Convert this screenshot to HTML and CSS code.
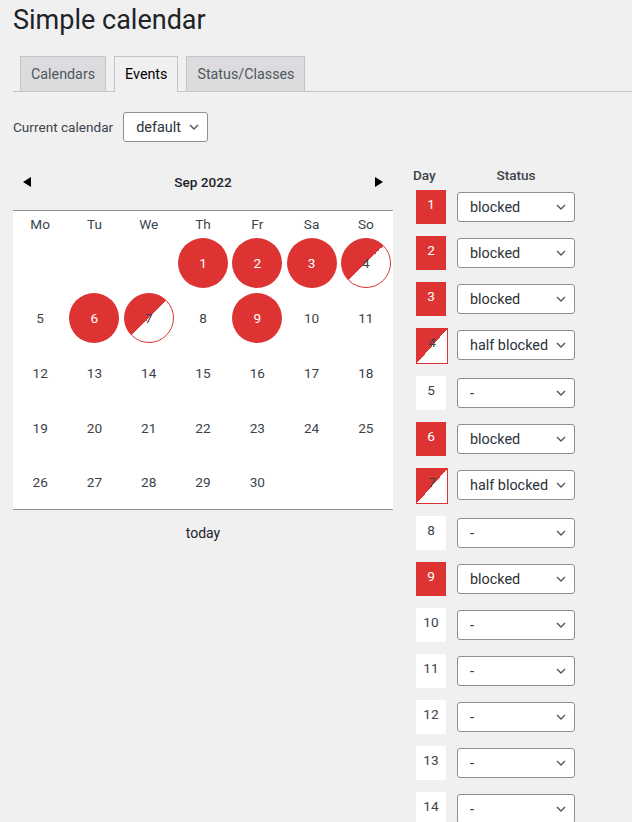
FILE: index.html
```html
<!DOCTYPE html>
<html lang="en">
<head>
<meta charset="utf-8">
<title>Simple calendar</title>
<link rel="stylesheet" href="styles.css">
</head>
<body>
<div class="wrap">
  <h1 class="title">Simple calendar</h1>
  <nav class="tabs">
    <a class="tab">Calendars</a>
    <a class="tab tab-active">Events</a>
    <a class="tab">Status/Classes</a>
  </nav>
  <div class="current">
    <label class="current-label">Current calendar</label>
    <span class="sel sel-cal">
      <select class="sel-input"><option>default</option></select>
      <svg class="chev" width="10" height="6" viewBox="0 0 10 6"><path d="M1 1l4 4 4-4" fill="none" stroke="#50575e" stroke-width="1.4"/></svg>
    </span>
  </div>

  <div class="main">
    <section class="cal">
      <div class="cal-nav">
        <svg class="arrow" width="8" height="10" viewBox="0 0 8 10"><polygon points="8,0 8,10 0,5" fill="#000"/></svg>
        <span class="cal-month">Sep 2022</span>
        <svg class="arrow" width="8" height="10" viewBox="0 0 8 10"><polygon points="0,0 0,10 8,5" fill="#000"/></svg>
      </div>
      <div class="cal-grid">
        <div class="dow">Mo</div><div class="dow">Tu</div><div class="dow">We</div><div class="dow">Th</div><div class="dow">Fr</div><div class="dow">Sa</div><div class="dow">So</div>

        <div class="day"></div><div class="day"></div><div class="day"></div>
        <div class="day"><span class="dot dot-full">1</span></div>
        <div class="day"><span class="dot dot-full">2</span></div>
        <div class="day"><span class="dot dot-full">3</span></div>
        <div class="day"><span class="dot dot-half">4</span></div>

        <div class="day">5</div>
        <div class="day"><span class="dot dot-full">6</span></div>
        <div class="day"><span class="dot dot-half">7</span></div>
        <div class="day">8</div>
        <div class="day"><span class="dot dot-full">9</span></div>
        <div class="day">10</div>
        <div class="day">11</div>

        <div class="day">12</div><div class="day">13</div><div class="day">14</div><div class="day">15</div><div class="day">16</div><div class="day">17</div><div class="day">18</div>
        <div class="day">19</div><div class="day">20</div><div class="day">21</div><div class="day">22</div><div class="day">23</div><div class="day">24</div><div class="day">25</div>
        <div class="day">26</div><div class="day">27</div><div class="day">28</div><div class="day">29</div><div class="day">30</div><div class="day"></div><div class="day"></div>
      </div>
      <div class="today">today</div>
    </section>

    <section class="list">
      <div class="list-head">
        <span class="lh-day">Day</span>
        <span class="lh-status">Status</span>
      </div>
      <div class="row"><span class="box box-full">1</span><span class="sel sel-row"><select class="sel-input"><option>blocked</option></select><svg class="chev" width="10" height="6" viewBox="0 0 10 6"><path d="M1 1l4 4 4-4" fill="none" stroke="#50575e" stroke-width="1.4"/></svg></span></div>
      <div class="row"><span class="box box-full">2</span><span class="sel sel-row"><select class="sel-input"><option>blocked</option></select><svg class="chev" width="10" height="6" viewBox="0 0 10 6"><path d="M1 1l4 4 4-4" fill="none" stroke="#50575e" stroke-width="1.4"/></svg></span></div>
      <div class="row"><span class="box box-full">3</span><span class="sel sel-row"><select class="sel-input"><option>blocked</option></select><svg class="chev" width="10" height="6" viewBox="0 0 10 6"><path d="M1 1l4 4 4-4" fill="none" stroke="#50575e" stroke-width="1.4"/></svg></span></div>
      <div class="row"><span class="box box-half">4</span><span class="sel sel-row"><select class="sel-input"><option>half blocked</option></select><svg class="chev" width="10" height="6" viewBox="0 0 10 6"><path d="M1 1l4 4 4-4" fill="none" stroke="#50575e" stroke-width="1.4"/></svg></span></div>
      <div class="row"><span class="box">5</span><span class="sel sel-row"><select class="sel-input"><option>-</option></select><svg class="chev" width="10" height="6" viewBox="0 0 10 6"><path d="M1 1l4 4 4-4" fill="none" stroke="#50575e" stroke-width="1.4"/></svg></span></div>
      <div class="row"><span class="box box-full">6</span><span class="sel sel-row"><select class="sel-input"><option>blocked</option></select><svg class="chev" width="10" height="6" viewBox="0 0 10 6"><path d="M1 1l4 4 4-4" fill="none" stroke="#50575e" stroke-width="1.4"/></svg></span></div>
      <div class="row"><span class="box box-half">7</span><span class="sel sel-row"><select class="sel-input"><option>half blocked</option></select><svg class="chev" width="10" height="6" viewBox="0 0 10 6"><path d="M1 1l4 4 4-4" fill="none" stroke="#50575e" stroke-width="1.4"/></svg></span></div>
      <div class="row"><span class="box">8</span><span class="sel sel-row"><select class="sel-input"><option>-</option></select><svg class="chev" width="10" height="6" viewBox="0 0 10 6"><path d="M1 1l4 4 4-4" fill="none" stroke="#50575e" stroke-width="1.4"/></svg></span></div>
      <div class="row"><span class="box box-full">9</span><span class="sel sel-row"><select class="sel-input"><option>blocked</option></select><svg class="chev" width="10" height="6" viewBox="0 0 10 6"><path d="M1 1l4 4 4-4" fill="none" stroke="#50575e" stroke-width="1.4"/></svg></span></div>
      <div class="row"><span class="box">10</span><span class="sel sel-row"><select class="sel-input"><option>-</option></select><svg class="chev" width="10" height="6" viewBox="0 0 10 6"><path d="M1 1l4 4 4-4" fill="none" stroke="#50575e" stroke-width="1.4"/></svg></span></div>
      <div class="row"><span class="box">11</span><span class="sel sel-row"><select class="sel-input"><option>-</option></select><svg class="chev" width="10" height="6" viewBox="0 0 10 6"><path d="M1 1l4 4 4-4" fill="none" stroke="#50575e" stroke-width="1.4"/></svg></span></div>
      <div class="row"><span class="box">12</span><span class="sel sel-row"><select class="sel-input"><option>-</option></select><svg class="chev" width="10" height="6" viewBox="0 0 10 6"><path d="M1 1l4 4 4-4" fill="none" stroke="#50575e" stroke-width="1.4"/></svg></span></div>
      <div class="row"><span class="box">13</span><span class="sel sel-row"><select class="sel-input"><option>-</option></select><svg class="chev" width="10" height="6" viewBox="0 0 10 6"><path d="M1 1l4 4 4-4" fill="none" stroke="#50575e" stroke-width="1.4"/></svg></span></div>
      <div class="row"><span class="box">14</span><span class="sel sel-row"><select class="sel-input"><option>-</option></select><svg class="chev" width="10" height="6" viewBox="0 0 10 6"><path d="M1 1l4 4 4-4" fill="none" stroke="#50575e" stroke-width="1.4"/></svg></span></div>
    </section>
  </div>
</div>
</body>
</html>
```

FILE: styles.css
```css
html, body {
  margin: 0;
  padding: 0;
  background: #f0f0f1;
}
body {
  font-family: Roboto, "Liberation Sans", sans-serif;
  font-size: 13.6px;
  color: #3c434a;
  overflow: hidden;
}
.wrap {
  padding-left: 13px;
}
.title {
  margin: 0;
  padding-top: 3px;
  font-size: 27px;
  line-height: 34px;
  font-weight: 400;
  color: #1d2327;
}
.tabs {
  display: flex;
  margin-top: 19px;
  border-bottom: 1px solid #c3c4c7;
  height: 35px;
}
.tab {
  display: block;
  margin-left: 7px;
  padding: 5px 10px;
  height: 24px;
  line-height: 24px;
  font-size: 14.3px;
  color: #50575e;
  background: #dcdcde;
  border: 1px solid #c3c4c7;
  border-bottom: none;
}
.tab + .tab {
  margin-left: 8px;
}
.tab-active {
  background: #f0f0f1;
  color: #000;
  height: 25px;
}
.current {
  display: flex;
  align-items: center;
  gap: 10px;
  margin-top: 20px;
}
.current-label {
  font-size: 13.6px;
  color: #3c434a;
}
.sel {
  position: relative;
  display: block;
}
.sel-input {
  -webkit-appearance: none;
  appearance: none;
  display: block;
  box-sizing: border-box;
  height: 30px;
  margin: 0;
  padding: 0 24px 0 12px;
  font-family: Roboto, "Liberation Sans", sans-serif;
  font-size: 14.4px;
  color: #2c3338;
  background: #fff;
  border: 1px solid #8c8f94;
  border-radius: 3px;
  outline: none;
}
.chev {
  position: absolute;
  top: 12px;
  right: 9px;
}
.sel-cal .sel-input {
  width: 85px;
  height: 30px;
}
.main {
  display: flex;
  gap: 20px;
  margin-top: 19px;
}
.cal {
  width: 380px;
}
.cal-nav {
  display: flex;
  align-items: center;
  justify-content: space-between;
  height: 42px;
  padding: 0 10px;
}
.cal-month {
  font-size: 13.6px;
  font-weight: 500;
  color: #1d2327;
}
.cal-grid {
  margin-top: 7px;
  display: grid;
  grid-template-columns: repeat(7, 1fr);
  grid-template-rows: 24px 55px 55px 55px 55px 54px;
  background: #fff;
  border-top: 1px solid #8c8f94;
  border-bottom: 1px solid #8c8f94;
}
.dow, .day {
  display: flex;
  align-items: center;
  justify-content: center;
  font-size: 13.6px;
  color: #3c434a;
}
.dow {
  padding-top: 2px;
}
.dot {
  display: flex;
  align-items: center;
  justify-content: center;
  box-sizing: border-box;
  width: 50px;
  height: 50px;
  border-radius: 50%;
}
.dot-full {
  background: #dd3333;
  color: #fff;
}
.dot-half {
  border: 1px solid #dd3333;
  background: linear-gradient(to bottom right, #dd3333 50%, #fff 50%);
  color: #3c434a;
}
.today {
  text-align: center;
  margin-top: 15px;
  font-size: 14px;
  color: #1d2327;
}
.list {
  padding-top: 5px;
}
.list-head {
  display: grid;
  grid-template-columns: 44px 118px;
  line-height: 18px;
  font-size: 13.6px;
  font-weight: 500;
  color: #3c434a;
  margin-bottom: 6px;
}
.lh-status {
  text-align: center;
}
.row {
  display: grid;
  grid-template-columns: 44px 118px;
  align-items: start;
  margin-bottom: 12px;
}
.box {
  display: block;
  margin-left: 3px;
  width: 30px;
  height: 34px;
  box-sizing: border-box;
  padding-top: 6px;
  text-align: center;
  font-size: 13.6px;
  line-height: 16px;
  background: #fff;
  color: #3c434a;
}
.box-full {
  background: #dd3333;
  color: #fff;
}
.box-half {
  width: 32px;
  height: 36px;
  border: 1px solid #dd3333;
  padding-top: 5px;
  background: linear-gradient(to bottom right, #dd3333 50%, #fff 50%);
  color: #3c434a;
}
.sel-row {
  margin-top: 2px;
}
.sel-row .sel-input {
  width: 118px;
}
```
